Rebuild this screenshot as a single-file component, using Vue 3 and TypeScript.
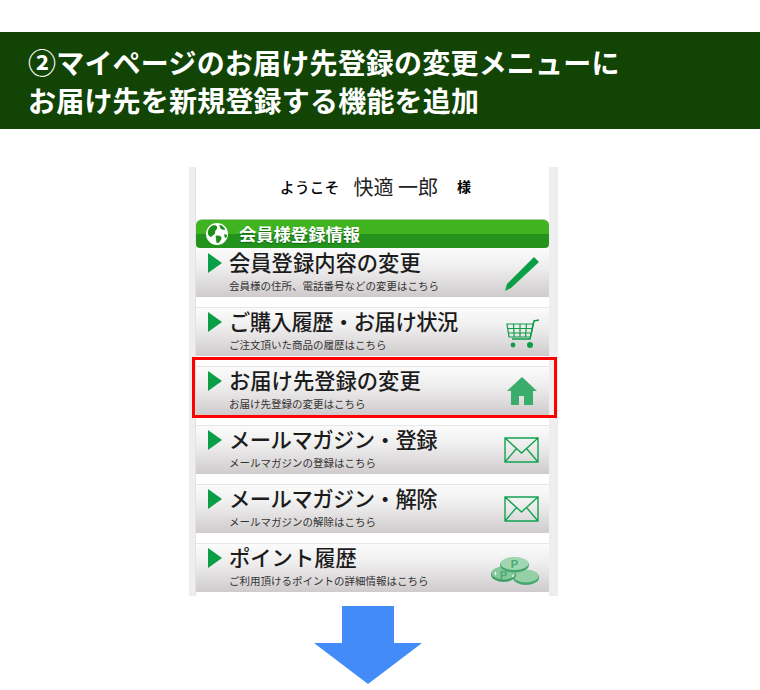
<script setup lang="ts">
interface MenuRow {
  title: string;
  note: string;
  icon: 'pen' | 'cart' | 'house' | 'mail' | 'coins';
  active?: boolean;
  tight?: boolean;
}

const rows: MenuRow[] = [
  { title: '会員登録内容の変更', note: '会員様の住所、電話番号などの変更はこちら', icon: 'pen' },
  { title: 'ご購入履歴・お届け状況', note: 'ご注文頂いた商品の履歴はこちら', icon: 'cart', tight: true },
  { title: 'お届け先登録の変更', note: 'お届け先登録の変更はこちら', icon: 'house', active: true },
  { title: 'メールマガジン・登録', note: 'メールマガジンの登録はこちら', icon: 'mail', tight: true },
  { title: 'メールマガジン・解除', note: 'メールマガジンの解除はこちら', icon: 'mail', tight: true },
  { title: 'ポイント履歴', note: 'ご利用頂けるポイントの詳細情報はこちら', icon: 'coins' },
];
</script>

<template>
  <div class="page">
    <h1 class="heading">②マイページのお届け先登録の変更メニューに<br />お届け先を新規登録する機能を追加</h1>

    <div class="phone">
      <div class="phone__inner">
        <p class="welcome">
          <span class="welcome__lead">ようこそ</span>
          <span class="welcome__name">快適 一郎</span>
          <span class="welcome__suffix">様</span>
        </p>

        <div class="bar">
          <svg class="bar__globe" viewBox="0 0 24 24">
            <circle cx="12" cy="12" r="12" fill="#fff" />
            <path d="M5 4c3-2 6-2 7 0 1 3-2 3-2 6s-3 3-4 5c-1 1-4-1-4-4 0-3 1-5 3-7z" fill="#1f8f1c" />
            <path d="M15 2c3 1 5 3 6 5-2 1-4 0-5-1-1-2-2-3-1-4zM11 14c3-1 5 0 6 2 0 2-2 5-4 6-2 0-2-2-2-4s-1-3 0-4zM20 12l3 1-1 4-2-2z" fill="#1f8f1c" />
          </svg>
          <span class="bar__label">会員様登録情報</span>
        </div>

        <div class="menu">
          <div v-for="row in rows" :key="row.title" class="row" :class="{ 'row--active': row.active }">
            <span class="row__arrow"></span>
            <div class="row__text">
              <div class="row__title" :class="{ 'row__title--tight': row.tight }">{{ row.title }}</div>
              <div class="row__note">{{ row.note }}</div>
            </div>
            <svg v-if="row.icon === 'pen'" class="icon icon--pen" viewBox="0 0 34 34">
              <path d="M29 0l5 5L6 31l-6 3 2-7z" fill="#0a9e46" />
            </svg>
            <svg v-else-if="row.icon === 'cart'" class="icon icon--cart" viewBox="0 0 34 30">
              <g fill="none" stroke="#0f9d4a" stroke-width="1.2">
                <path d="M33 1l-5 1-4 18H6" stroke-width="1.500" />
                <path d="M1 5h26l-2.500 13H3zM1.600 9.500h25M2.300 14h23.500M7.500 5l.7 13M14 5v13M20.500 5l-1 13" />
              </g>
              <circle cx="7" cy="26" r="2.400" fill="#0f9d4a" />
              <circle cx="24" cy="26" r="3" fill="#0f9d4a" />
            </svg>
            <svg v-else-if="row.icon === 'house'" class="icon icon--house" viewBox="0 0 30 28">
              <path d="M15 0l15 14h-4v14H17v-9h-5v9H4V14H0z" fill="#3aad6c" />
            </svg>
            <svg v-else-if="row.icon === 'mail'" class="icon icon--mail" viewBox="0 0 35 26">
              <path d="M1 1h33v24H1zM1 1l16.500 15L34 1M1 25l11.500-13.500M34 25L22.500 11.500" fill="none" stroke="#12a351" stroke-width="1.400" />
            </svg>
            <svg v-else class="icon icon--coins" viewBox="0 0 52 30">
              <ellipse cx="38" cy="21.500" rx="13" ry="7.500" fill="#45a76b" />
              <ellipse cx="38" cy="20" rx="12.500" ry="6.500" fill="#93d0a6" />
              <ellipse cx="15.500" cy="18.500" rx="12.500" ry="7.500" fill="#3f9f65" />
              <ellipse cx="15.500" cy="17" rx="12" ry="6.500" fill="#86c89b" />
              <ellipse cx="26.500" cy="9" rx="14.500" ry="7.500" fill="#45a76b" />
              <ellipse cx="26.500" cy="7.500" rx="14" ry="6.500" fill="#a0d6b2" />
              <text x="26.500" y="12" class="coin-p" text-anchor="middle">P</text>
              <text x="15.500" y="23" class="coin-p" text-anchor="middle">P</text>
              <path d="M6.500 17.500l1-2 1 2-1 2zM24 20l1-1.500 1 1.500-1 1.500z" fill="#fff" />
            </svg>
          </div>
        </div>
      </div>
    </div>

    <div class="down">
      <div class="down__shaft"></div>
      <div class="down__head"></div>
    </div>
  </div>
</template>

<style scoped>
.page {
  width: 760px;
  height: 690px;
  padding-top: 32px;
  box-sizing: border-box;
  overflow: hidden;
  background: #fff;
  font-family: "Noto Sans CJK JP", "Liberation Sans", sans-serif;
}

.heading {
  margin: 0;
  height: 97px;
  padding: 11px 0 0 28px;
  box-sizing: border-box;
  background: #114405;
  color: #fff;
  font-size: 28px;
  font-weight: 700;
  letter-spacing: 0.2px;
  line-height: 38px;
  white-space: nowrap;
}

.phone {
  width: 369px;
  height: 429px;
  margin: 38px 0 0 189px;
  padding: 0 9px 0 6px;
  box-sizing: border-box;
  background: #eeeeee;
}

.phone__inner {
  height: 100%;
  background: #fff;
  border-left: 1px solid #e2e2e2;
}

.welcome {
  display: flex;
  align-items: center;
  height: 52px;
  box-sizing: border-box;
  margin: 0;
  padding: 0 0 14px 84px;
  color: #000;
}

.welcome__lead {
  font-size: 14.500px;
  letter-spacing: 0.400px;
  font-weight: 500;
}

.welcome__name {
  font-size: 20px;
  margin-left: 14px;
  color: #222;
}

.welcome__suffix {
  font-size: 14px;
  font-weight: 700;
  margin-left: 19px;
}

.bar {
  display: flex;
  align-items: center;
  height: 29px;
  box-sizing: border-box;
  padding-left: 10px;
  border-radius: 6px 6px 4px 4px;
  border-top: 1px solid #a9c9a2;
  background: linear-gradient(#3fb320 0, #3fb320 50%, #23931e 50%, #23931e 100%);
}

.bar__globe {
  width: 22px;
  height: 22px;
}

.bar__label {
  margin-left: 11px;
  color: #fff;
  font-size: 17.300px;
  line-height: 1;
  font-weight: 700;
  text-shadow: 0 1px 1px #14640f;
}

.menu {
  display: flex;
  flex-direction: column;
  gap: 10px;
}

.row {
  position: relative;
  display: flex;
  height: 49px;
  box-sizing: border-box;
  padding: 3px 0 0 12px;
  border-top: 1px solid #e6e6e6;
  background: linear-gradient(#fbfbfb 0%, #f1f0f0 35%, #cfcbcc 100%);
}

.row:first-child {
  padding-top: 4px;
  border-top: none;
}

.row--active::after {
  content: "";
  position: absolute;
  left: -4px;
  right: -8px;
  top: -10px;
  bottom: -3px;
  border: 3px solid #ff0000;
}

.row__arrow {
  flex: none;
  width: 0;
  height: 0;
  margin-top: 1px;
  border-style: solid;
  border-width: 10px 0 10px 14px;
  border-color: transparent transparent transparent #0a9e46;
}

.row__text {
  flex: 1;
  margin-left: 7px;
  min-width: 0;
}

.row__title {
  margin-top: -3px;
  color: #1c1c1c;
  font-size: 21.300px;
  font-weight: 500;
  line-height: 25px;
  white-space: nowrap;
}

.row__title--tight {
  letter-spacing: -0.5px;
}

.row__note {
  margin-top: 5px;
  color: #333;
  font-size: 10.500px;
  line-height: 13px;
  white-space: nowrap;
}

.icon {
  position: absolute;
  display: block;
}

.icon--pen {
  right: 10px;
  top: 9px;
  width: 34px;
  height: 34px;
}

.icon--cart {
  right: 9px;
  top: 11px;
  width: 34px;
  height: 30px;
}

.icon--house {
  right: 12px;
  top: 10px;
  width: 30px;
  height: 28px;
}

.icon--mail {
  right: 10px;
  top: 11px;
  width: 35px;
  height: 26px;
}

.icon--coins {
  right: 9px;
  top: 12px;
  width: 52px;
  height: 30px;
}

.coin-p {
  fill: #4ba96f;
  font-size: 11px;
  font-weight: 700;
  font-family: "Liberation Sans", sans-serif;
}

.down {
  display: flex;
  flex-direction: column;
  align-items: center;
  width: 107px;
  margin: 10px 0 0 314px;
}

.down__shaft {
  width: 52px;
  height: 37px;
  background: #428bf9;
}

.down__head {
  flex: none;
  width: 0;
  height: 0;
  border-style: solid;
  border-width: 41px 54px 0 54px;
  border-color: #428bf9 transparent transparent transparent;
}
</style>
